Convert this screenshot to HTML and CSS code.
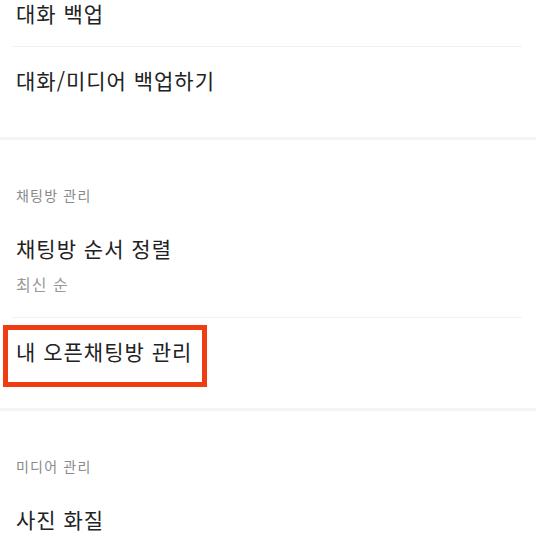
FILE: index.html
```html
<!DOCTYPE html>
<html lang="ko">
  <head>
    <meta charset="utf-8">
    <title>채팅 설정</title>
    <link rel="stylesheet" href="styles.css">
  </head>
  <body>
    <div class="page">

      <!-- backup section, scrolled partly out of view -->
      <div class="section">
        <div class="item">
          <div class="item-title">대화 백업</div>
        </div>
        <div class="item">
          <div class="item-title">대화/미디어 백업하기</div>
        </div>
      </div>

      <div class="section">
        <div class="section-title">채팅방 관리</div>
        <div class="item">
          <div class="item-title">채팅방 순서 정렬</div>
          <div class="item-sub">최신 순</div>
        </div>
        <div class="item">
          <div class="item-title">내 오픈채팅방 관리</div>
          <span class="highlight"></span>
        </div>
      </div>

      <div class="section">
        <div class="section-title">미디어 관리</div>
        <div class="item">
          <div class="item-title">사진 화질</div>
        </div>
      </div>

    </div>
  </body>
</html>
```

FILE: styles.css
```css
*{
  margin:0;
  padding:0;
  box-sizing:border-box;
}

body{
  background-color:#ffffff;
  color:#222222;
  font-family:"Noto Sans CJK KR", "Noto Sans", sans-serif;
  overflow:hidden;
}

/* the screenshot is scrolled a little, first row is cut at the top */
.page{
  margin-top:-20px;
}

.section{
  padding-bottom:24px;
  border-bottom:3px solid #f4f4f4;
}

.section-title{
  padding:45px 16px 10px;
  font-size:14px;
  line-height:20px;
  letter-spacing:1.2px;
  color:#8a8a8a;
}

.item{
  position:relative;
  margin:0 14px 0 12px;
  padding:20px 4px;
  border-bottom:1px solid #f2f2f2;
}

.item:last-child{
  border-bottom:none;
}

.item-title{
  font-size:21px;
  line-height:26px;
  letter-spacing:1px;
  color:#222222;
}

.item-sub{
  margin-top:13px;
  margin-bottom:3px;
  font-size:16px;
  line-height:20px;
  letter-spacing:1px;
  color:#999999;
}

/* red annotation frame drawn over the row */
.highlight{
  position:absolute;
  left:-9px;
  top:7px;
  width:204px;
  height:62px;
  border:5px solid #f03c12;
}
```
